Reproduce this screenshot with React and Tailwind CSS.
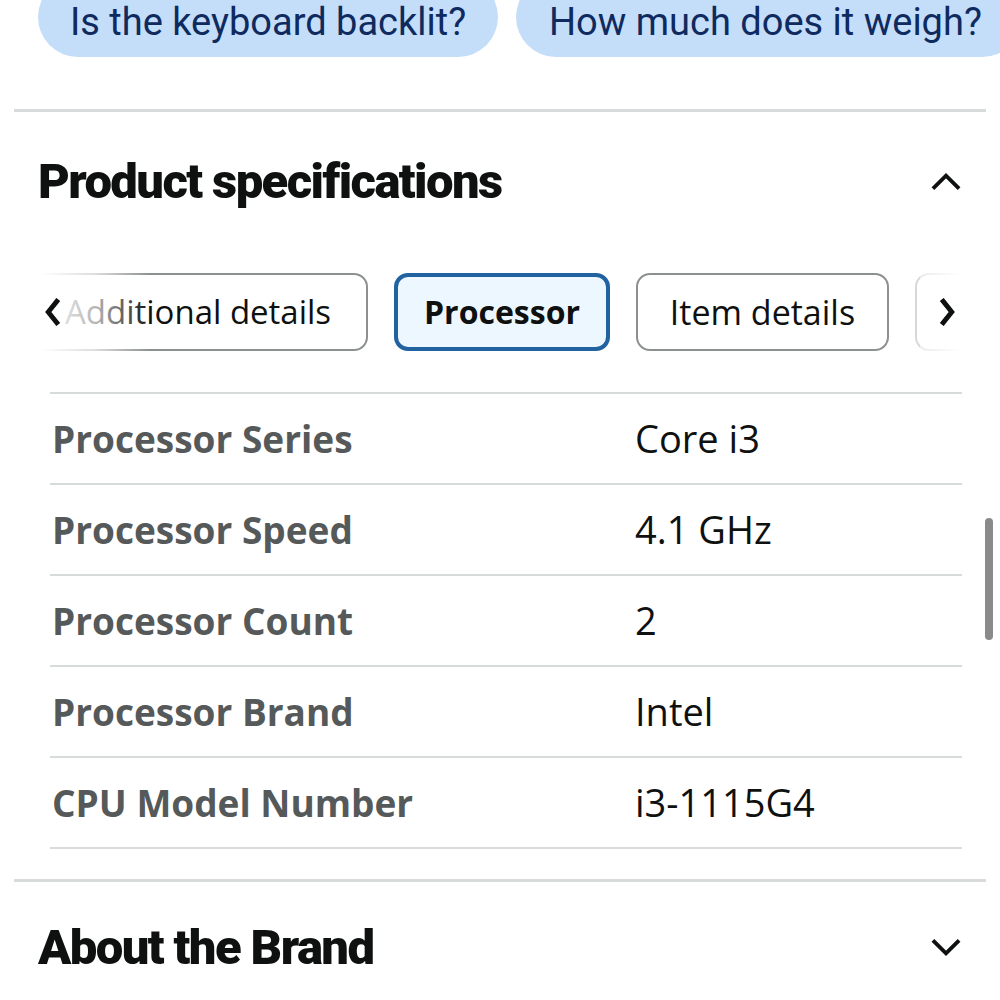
import React from 'react';

const specs = [
  { label: 'Processor Series', value: 'Core i3' },
  { label: 'Processor Speed', value: '4.1 GHz' },
  { label: 'Processor Count', value: '2' },
  { label: 'Processor Brand', value: 'Intel' },
  { label: 'CPU Model Number', value: 'i3-1115G4' },
];

const Chevron = ({ dir = 'down', className = '', weight = 3.6 }) => {
  const points = {
    up: '4,17 15,6 26,17',
    down: '4,6 15,17 26,6',
    left: '12,3 4,13 12,23',
    right: '4,3 12,13 4,23',
  }[dir];
  const box = dir === 'up' || dir === 'down' ? '0 0 30 23' : '0 0 16 26';
  return (
    <svg viewBox={box} className={className} fill="none" stroke="#0f1111" strokeWidth={weight} strokeLinecap="square">
      <polyline points={points} />
    </svg>
  );
};

const App = () => {
  return (
    <div className="relative w-[1000px] h-[1000px] overflow-hidden bg-white font-['Open_Sans',sans-serif]">
      {/* question chips */}
      <div className="flex gap-[18px] pl-[38px] -mt-[23px] whitespace-nowrap">
        <div className="w-[460px] h-[80px] shrink-0 flex items-end justify-center pb-[16px] rounded-full bg-[#c4ddf9] text-[#0e2a5e] text-[38px] font-['Roboto',sans-serif] leading-none">
          Is the keyboard backlit?
        </div>
        <div className="h-[80px] shrink-0 flex items-end pb-[16px] pl-[33px] pr-[40px] rounded-full bg-[#c4ddf9] text-[#0e2a5e] text-[38px] font-['Roboto',sans-serif] leading-none">
          How much does it weigh?
        </div>
      </div>

      <div className="mt-[52px] mx-[14px] h-[3px] bg-[#d8dbdb]" />

      {/* product specifications */}
      <div className="h-[138px] flex items-center justify-between pl-[38px] pr-[38px]">
        <h2 className="text-[49px] font-black tracking-[-1.6px] text-[#0f1111] leading-none font-['Roboto',sans-serif]">
          Product specifications
        </h2>
        <Chevron dir="up" className="w-[32px] h-[25px]" />
      </div>

      {/* tabs */}
      <div className="relative mt-[23px] ml-[40px] w-[920px] h-[78px] overflow-hidden">
        <div className="flex gap-[26px] -ml-[12px] h-full">
          <div className="w-[340px] shrink-0 h-full flex items-center justify-center rounded-[14px] border-2 border-[#8d9090] text-[33px] text-[#0f1111]">
            Additional details
          </div>
          <div className="w-[216px] shrink-0 h-full flex items-center justify-center rounded-[14px] border-[4px] border-[#2162a1] bg-[#edf7ff] text-[32px] font-bold text-[#0f1111]">
            Processor
          </div>
          <div className="w-[253px] shrink-0 h-full flex items-center justify-center rounded-[14px] border-2 border-[#8d9090] text-[34px] text-[#0f1111]">
            Item details
          </div>
          <div className="w-[200px] shrink-0 h-full rounded-[14px] border-2 border-[#d5d9d9]" />
        </div>
        <div className="absolute left-0 top-0 h-full w-[110px] bg-gradient-to-r from-white via-white/70 to-transparent" />
        <div className="absolute right-0 top-0 h-full w-[40px] bg-gradient-to-l from-white to-white/50" />
        <Chevron dir="left" weight={4.6} className="absolute left-[4px] top-[25px] w-[17px] h-[28px]" />
        <Chevron dir="right" weight={4.6} className="absolute right-[4px] top-[25px] w-[17px] h-[28px]" />
      </div>

      {/* spec table */}
      <div className="mt-[41px] ml-[50px] w-[912px] border-b-2 border-[#d8dbdb]">
        {specs.map((s) => (
          <div key={s.label} className="h-[91px] border-t-2 border-[#d8dbdb] flex items-center">
            <div className="w-[585px] pl-[2px] text-[37px] font-bold text-[#565959]">{s.label}</div>
            <div className="text-[38px] text-[#0f1111]">{s.value}</div>
          </div>
        ))}
      </div>

      <div className="mt-[30px] mx-[14px] h-[3px] bg-[#d8dbdb]" />

      {/* about the brand */}
      <div className="h-[130px] flex items-center justify-between pl-[38px] pr-[38px]">
        <h2 className="text-[49px] font-black tracking-[-1.6px] text-[#0f1111] leading-none font-['Roboto',sans-serif]">
          About the Brand
        </h2>
        <Chevron dir="down" className="w-[32px] h-[25px]" />
      </div>

      {/* scrollbar */}
      <div className="absolute left-[985px] top-[518px] w-[8px] h-[122px] rounded-full bg-[#8a8a8a]" />
    </div>
  );
};

export default App;
